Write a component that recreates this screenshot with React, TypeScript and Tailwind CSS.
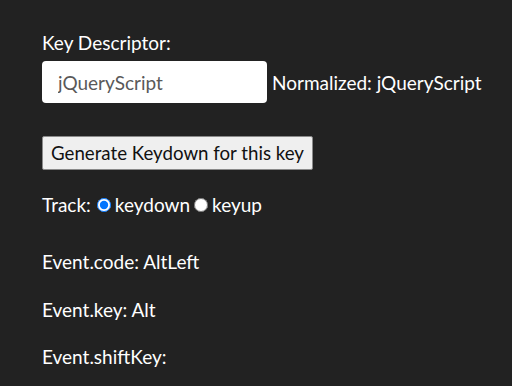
const App = () => {
  return (
    <div
      className="min-h-[386px] w-[512px] bg-[#222222] pl-[42px] pt-[31px] text-[19px] text-white"
      style={{ fontFamily: 'Lato, "Open Sans", sans-serif' }}
    >
      {/* Key descriptor */}
      <div className="leading-[24px]">Key Descriptor:</div>
      <div className="mt-[6px] flex items-baseline">
        <input
          type="text"
          defaultValue="jQueryScript"
          className="h-[42px] w-[225px] rounded-[4px] bg-white pl-[16px] text-[19px] text-[#595959] outline-none"
        />
        <span className="ml-[5px] leading-[24px]">Normalized: jQueryScript</span>
      </div>

      <button className="mt-[33px] h-[34px] w-[271px] rounded-[2px] border border-[#8a8a8a] bg-[#efefef] text-[18.7px] text-[#111]">
        Generate Keydown for this key
      </button>

      {/* Track */}
      <div className="mt-[23px] flex items-center leading-[24px]">
        <span>Track:</span>
        <input type="radio" name="track" defaultChecked className="m-0 ml-[6px] h-[14px] w-[14px]" />
        <span className="ml-[4px]">keydown</span>
        <input type="radio" name="track" className="m-0 ml-[4px] h-[14px] w-[14px]" />
        <span className="ml-[4px]">keyup</span>
      </div>

      {/* Event output */}
      <p className="mt-[33px] leading-[24px]">Event.code: AltLeft</p>
      <p className="mt-[24px] leading-[24px]">Event.key: Alt</p>
      <p className="mt-[23px] leading-[24px]">Event.shiftKey:</p>
    </div>
  )
}

export default App
